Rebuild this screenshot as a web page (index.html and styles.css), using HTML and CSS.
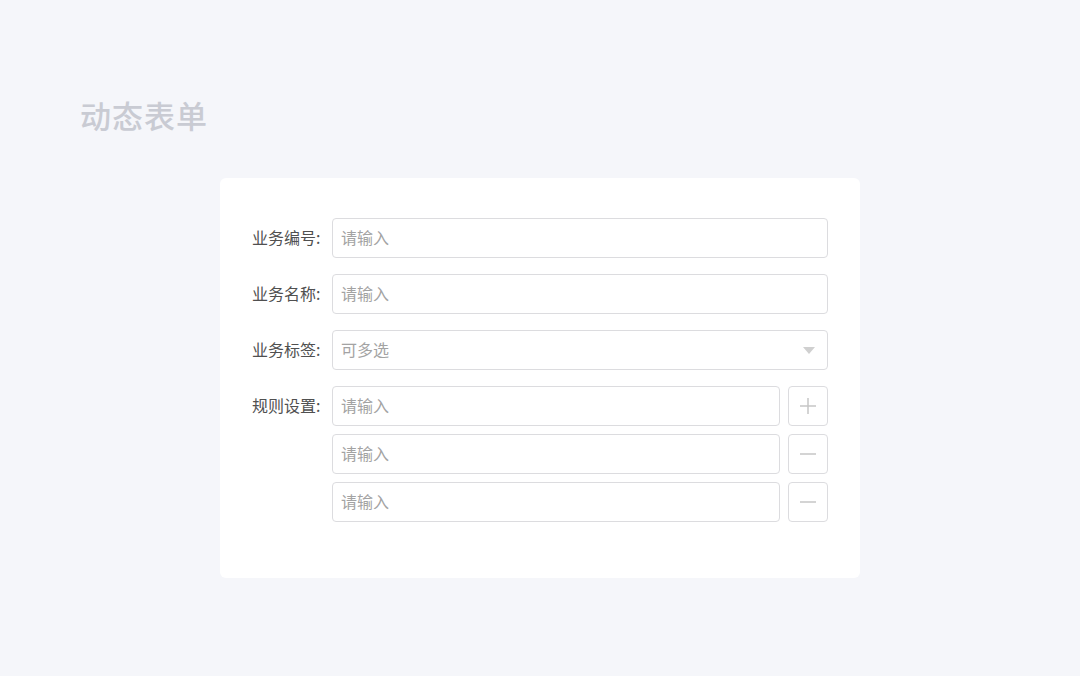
FILE: index.html
```html
<!DOCTYPE html>
<html lang="zh-CN">
  <head>
    <meta charset="UTF-8" />
    <meta name="viewport" content="width=device-width, initial-scale=1.0" />
    <title>动态表单</title>
    <link rel="stylesheet" href="styles.css">
  </head>
  <body>
    <h1 class="page-title">动态表单</h1>

    <div class="card">
      <form class="form">
        <!-- 业务编号 -->
        <div class="form-row">
          <label class="form-label" for="code">业务编号:</label>
          <div class="form-field">
            <input type="text" id="code" placeholder="请输入" />
          </div>
        </div>

        <!-- 业务名称 -->
        <div class="form-row">
          <label class="form-label" for="name">业务名称:</label>
          <div class="form-field">
            <input type="text" id="name" placeholder="请输入" />
          </div>
        </div>

        <!-- 业务标签 -->
        <div class="form-row">
          <label class="form-label">业务标签:</label>
          <div class="form-field">
            <div class="select">
              <span class="select-placeholder">可多选</span>
              <span class="select-arrow"></span>
            </div>
          </div>
        </div>

        <!-- 规则设置 -->
        <div class="form-row">
          <label class="form-label">规则设置:</label>
          <div class="form-field rules">
            <div class="rule">
              <input type="text" placeholder="请输入" />
              <button type="button" class="icon-btn">
                <svg width="18" height="18" viewBox="0 0 18 18"><path d="M9 1v16M1 9h16" stroke="#c6c6c6" stroke-width="1.5" fill="none"/></svg>
              </button>
            </div>
            <div class="rule">
              <input type="text" placeholder="请输入" />
              <button type="button" class="icon-btn">
                <svg width="18" height="18" viewBox="0 0 18 18"><path d="M1 9h16" stroke="#c6c6c6" stroke-width="1.5" fill="none"/></svg>
              </button>
            </div>
            <div class="rule">
              <input type="text" placeholder="请输入" />
              <button type="button" class="icon-btn">
                <svg width="18" height="18" viewBox="0 0 18 18"><path d="M1 9h16" stroke="#c6c6c6" stroke-width="1.5" fill="none"/></svg>
              </button>
            </div>
          </div>
        </div>
      </form>
    </div>
  </body>
</html>
```

FILE: styles.css
```css
:root {
  --bg: #f5f6fa;
  --card-bg: #ffffff;
  --border: #dcdcdf;
  --label: #505050;
  --placeholder: #a3a3a3;
  --title: #c9cbd3;
}

* {
  margin: 0;
  padding: 0;
  box-sizing: border-box;
  font-family: "Noto Sans CJK SC", "Noto Sans", sans-serif;
}

body {
  background-color: var(--bg);
  min-height: 100vh;
  padding: 94px 0 0 80px;
}

.page-title {
  font-size: 31px;
  font-weight: 500;
  line-height: 42px;
  color: var(--title);
  letter-spacing: 1px;
}

.card {
  width: 640px;
  margin: 42px 0 0 140px;
  background: var(--card-bg);
  border-radius: 6px;
  padding: 40px 32px 56px;
}

.form-row {
  display: flex;
  margin-bottom: 16px;
}

.form-row:last-child {
  margin-bottom: 0;
}

.form-label {
  width: 80px;
  flex-shrink: 0;
  line-height: 38px;
  font-size: 16px;
  color: var(--label);
}

.form-field {
  flex: 1;
}

input[type="text"],
.select {
  width: 100%;
  height: 40px;
  padding: 0 8px 2px;
  border: 1px solid var(--border);
  border-radius: 4px;
  font-size: 16px;
  color: var(--label);
  background: #fff;
  outline: none;
}

input::placeholder {
  color: var(--placeholder);
}

.select {
  display: flex;
  align-items: center;
  justify-content: space-between;
  padding-right: 12px;
}

.select-placeholder {
  color: var(--placeholder);
}

.select-arrow {
  width: 0;
  height: 0;
  margin-top: 2px;
  border-left: 6px solid transparent;
  border-right: 6px solid transparent;
  border-top: 7px solid #d0d0d0;
}

.rules {
  display: flex;
  flex-direction: column;
  gap: 8px;
}

.rule {
  display: flex;
  gap: 8px;
}

.icon-btn {
  width: 40px;
  height: 40px;
  flex-shrink: 0;
  border: 1px solid var(--border);
  border-radius: 4px;
  background: #fff;
  display: flex;
  align-items: center;
  justify-content: center;
  cursor: pointer;
}
```
